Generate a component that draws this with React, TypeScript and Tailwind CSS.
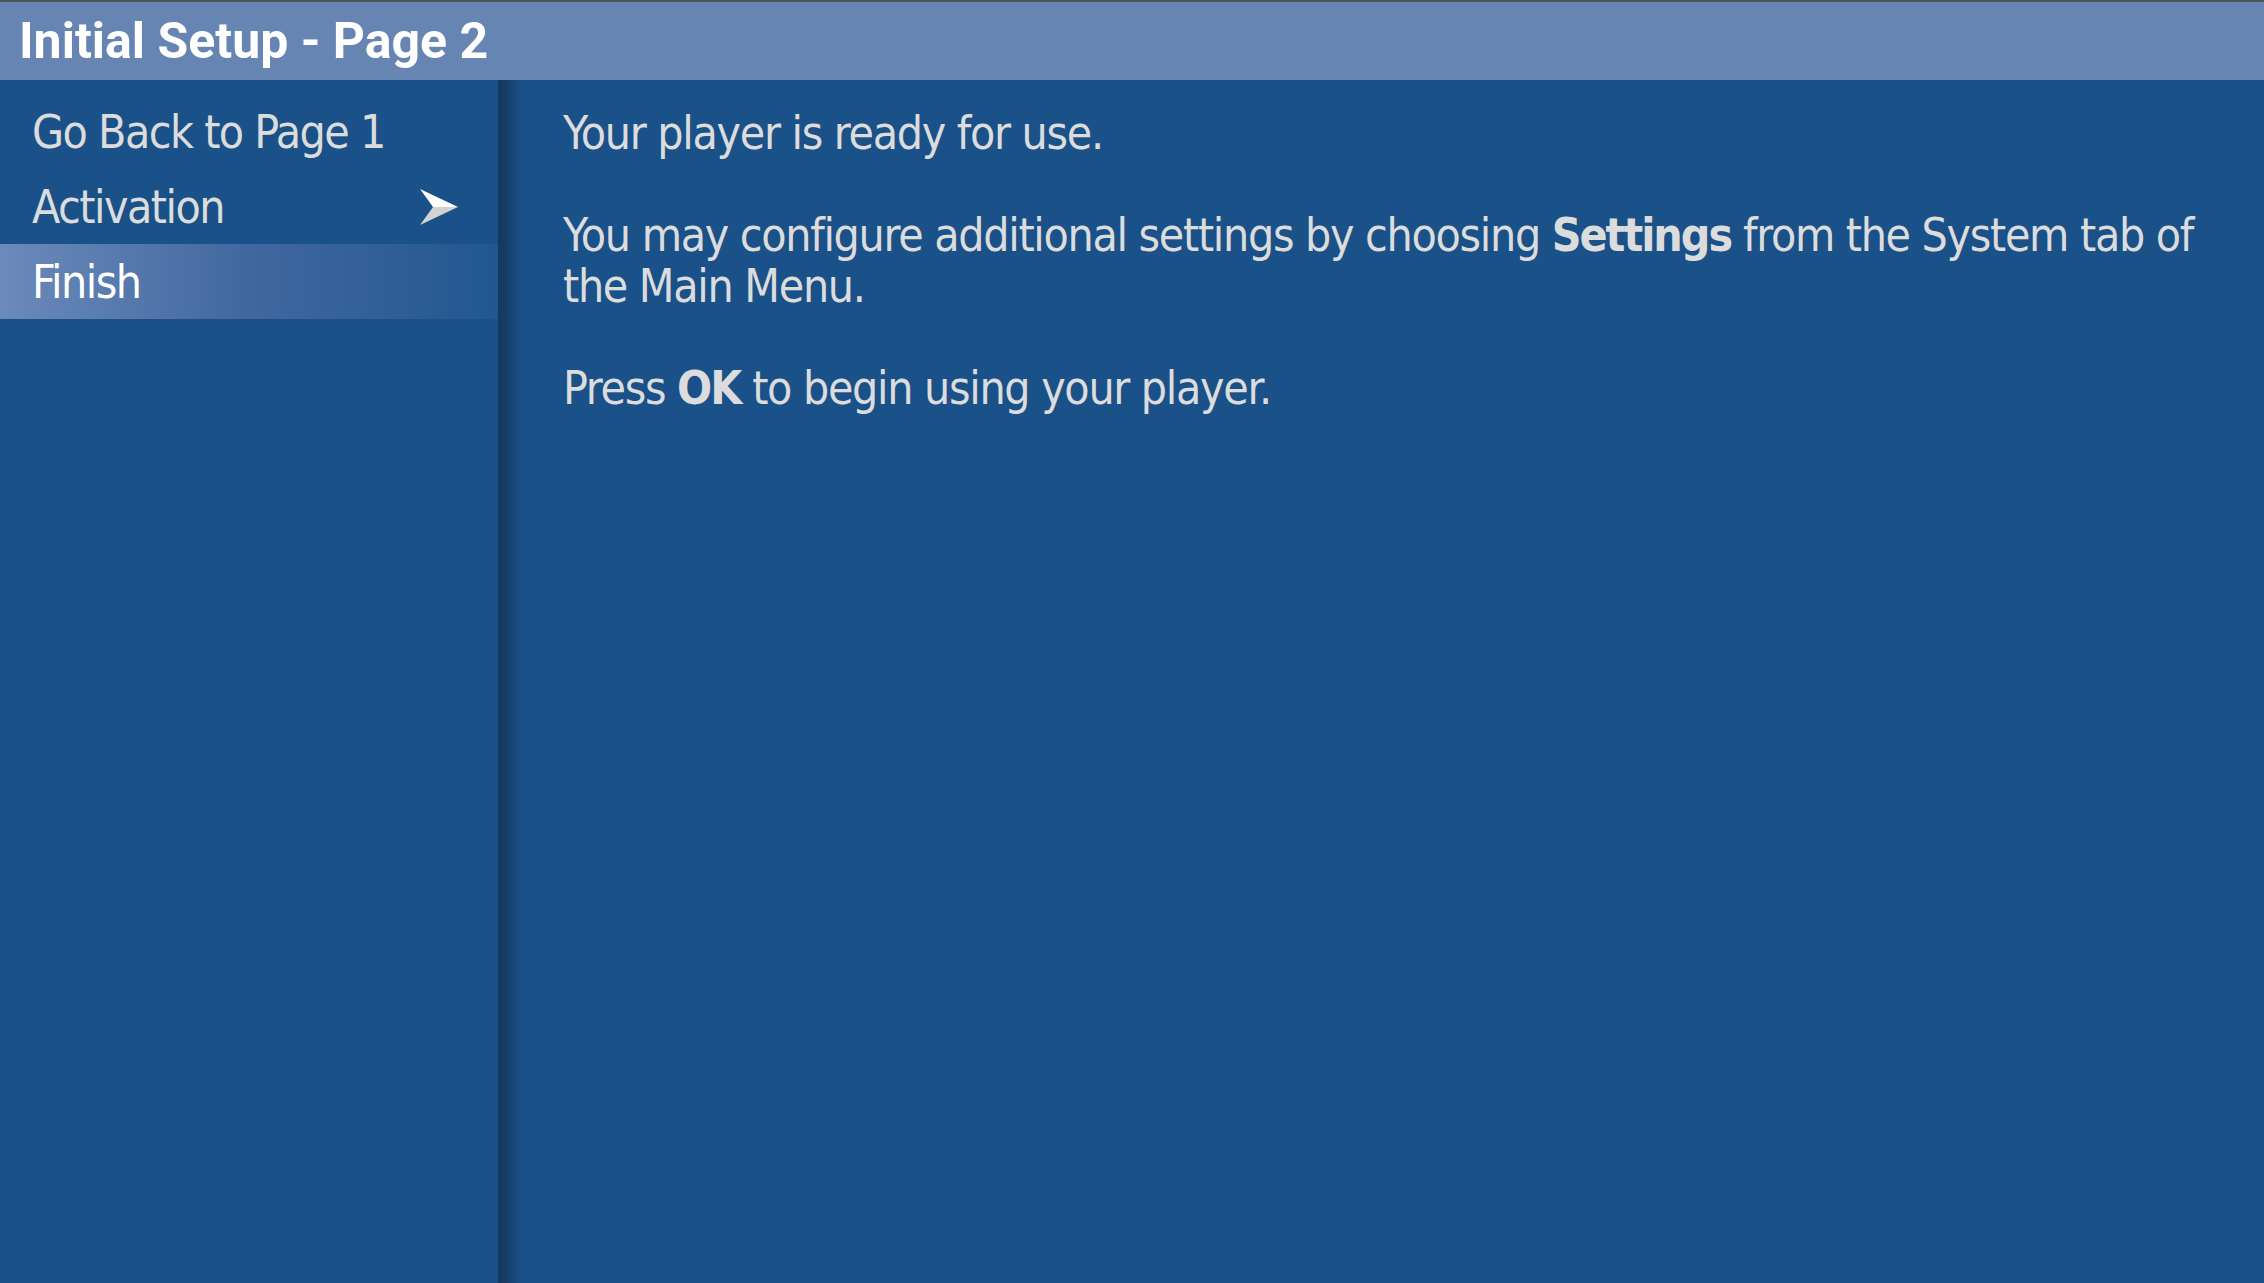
import { ReactNode } from "react";

const NARROW = "font-['DejaVu_Sans_Condensed','Liberation_Sans',sans-serif]";

function PointerArrow() {
  return (
    <svg width="38" height="36" viewBox="0 0 38 36" className="shrink-0">
      <polygon points="0,0 38,18 13,18" fill="#ffffff" />
      <polygon points="13,18 38,18 0,36" fill="#d2d2d2" />
    </svg>
  );
}

function MenuItem({ label, active, arrow }: { label: string; active?: boolean; arrow?: boolean }) {
  return (
    <div
      className={`flex h-[75px] items-center justify-between pl-[32px] pr-[40px] ${
        active ? "bg-gradient-to-r from-[#6c8abb] via-[#40689f] to-[#21578f] text-white" : "text-[#dcdcdc]"
      }`}
    >
      <span className="text-[46px] leading-none tracking-[-1.5px]">{label}</span>
      {arrow && <PointerArrow />}
    </div>
  );
}

function Para({ children }: { children: ReactNode }) {
  return <p className="mb-[51px]">{children}</p>;
}

export default function App() {
  return (
    <div className={`flex h-[1283px] w-[2264px] flex-col overflow-hidden bg-[#1b5189] ${NARROW}`}>
      {/* Title bar */}
      <div className="flex h-[80px] shrink-0 items-center border-t-2 border-[#4d5257] bg-[#6785b3] pl-[19px]">
        <h1 className="font-['Roboto','Liberation_Sans',sans-serif] text-[50px] font-bold leading-none text-white">
          Initial Setup - Page 2
        </h1>
      </div>

      <div className="flex min-h-0 flex-1">
        {/* Sidebar */}
        <div className="w-[498px] shrink-0 pt-[14px]">
          <MenuItem label="Go Back to Page 1" />
          <MenuItem label="Activation" arrow />
          <MenuItem label="Finish" active />
        </div>

        {/* Sidebar edge shadow */}
        <div className="w-[24px] shrink-0 bg-gradient-to-r from-[#163759] via-[#19426f] to-[#1b5189]" />

        {/* Content */}
        <div className="flex-1 pl-[41px] pr-[16px] pt-[28px] text-[46px] leading-[51px] tracking-[-1.3px] text-[#dcdcdc]">
          <Para>Your player is ready for use.</Para>
          <Para>
            <span>You may configure additional settings by choosing </span>
            <b className="font-bold tracking-[-2px]">Settings</b>
            <span> from the System tab of</span>
            <br />
            <span>the Main Menu.</span>
          </Para>
          <Para>
            Press <b className="font-bold tracking-[-2px]">OK</b> to begin using your player.
          </Para>
        </div>
      </div>
    </div>
  );
}
